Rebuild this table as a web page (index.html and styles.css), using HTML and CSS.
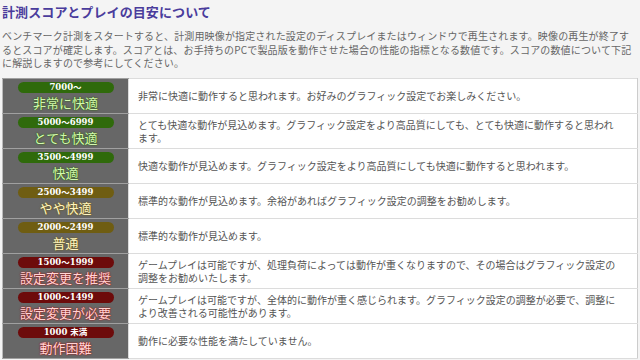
FILE: index.html
```html
<!DOCTYPE html>
<html lang="ja">
<head>
<meta charset="utf-8">
<link rel="stylesheet" href="styles.css">
</head>
<body>
<div class="page">
  <h1 class="title">計測スコアとプレイの目安について</h1>
  <p class="intro">ベンチマーク計測をスタートすると、計測用映像が指定された設定のディスプレイまたはウィンドウで再生されます。映像の再生が終了するとスコアが確定します。スコアとは、お手持ちのPCで製品版を動作させた場合の性能の指標となる数値です。スコアの数値について下記に解説しますので参考にしてください。</p>
  <table class="score">
    <tr>
      <td class="rank green"><span class="pill">7000～</span><span class="label">非常に快適</span></td>
      <td class="desc">非常に快適に動作すると思われます。お好みのグラフィック設定でお楽しみください。</td>
    </tr>
    <tr>
      <td class="rank green"><span class="pill">5000～6999</span><span class="label">とても快適</span></td>
      <td class="desc">とても快適な動作が見込めます。グラフィック設定をより高品質にしても、とても快適に動作すると思われます。</td>
    </tr>
    <tr>
      <td class="rank green"><span class="pill">3500～4999</span><span class="label">快適</span></td>
      <td class="desc">快適な動作が見込めます。グラフィック設定をより高品質にしても快適に動作すると思われます。</td>
    </tr>
    <tr>
      <td class="rank yellow"><span class="pill">2500～3499</span><span class="label">やや快適</span></td>
      <td class="desc">標準的な動作が見込めます。余裕があればグラフィック設定の調整をお勧めします。</td>
    </tr>
    <tr>
      <td class="rank yellow"><span class="pill">2000～2499</span><span class="label">普通</span></td>
      <td class="desc">標準的な動作が見込めます。</td>
    </tr>
    <tr>
      <td class="rank red"><span class="pill">1500～1999</span><span class="label">設定変更を推奨</span></td>
      <td class="desc">ゲームプレイは可能ですが、処理負荷によっては動作が重くなりますので、その場合はグラフィック設定の調整をお勧めいたします。</td>
    </tr>
    <tr>
      <td class="rank red"><span class="pill">1000～1499</span><span class="label">設定変更が必要</span></td>
      <td class="desc">ゲームプレイは可能ですが、全体的に動作が重く感じられます。グラフィック設定の調整が必要で、調整により改善される可能性があります。</td>
    </tr>
    <tr>
      <td class="rank red"><span class="pill">1000 未満</span><span class="label">動作困難</span></td>
      <td class="desc">動作に必要な性能を満たしていません。</td>
    </tr>
  </table>
</div>
</body>
</html>
```

FILE: styles.css
```css
html, body {
  margin: 0;
  padding: 0;
  background: #f4f4f4;
}
body {
  font-family: "Noto Sans CJK JP", "Noto Sans", sans-serif;
  color: #555;
}
.page {
  padding: 4px 2px 0 2px;
}
.title {
  margin: 0;
  font-size: 13px;
  line-height: 16px;
  font-weight: bold;
  color: #4a3c9c;
  letter-spacing: 0.1px;
}
.intro {
  margin: 9px 0 0 0;
  font-size: 10px;
  line-height: 13.5px;
  letter-spacing: 0.15px;
  color: #666;
}
.score {
  margin-top: 8px;
  width: 636px;
  border-collapse: collapse;
  background: #fff;
}
.score tr {
  height: 35px;
}
.score td {
  padding: 0;
}
.rank {
  width: 126px;
  box-sizing: border-box;
  vertical-align: top;
  padding-top: 3px !important;
  background: #676767;
  text-align: center;
  border-top: 1px solid #a0a0a0;
  border-bottom: 1px solid #a0a0a0;
  border-left: 1px solid #bbb;
}
.pill {
  display: block;
  width: 96px;
  height: 11px;
  margin: 0 auto;
  border-radius: 6px;
  color: #fff;
  font-family: "DejaVu Serif", "Liberation Serif", "Noto Sans CJK JP", serif;
  font-weight: bold;
  font-size: 8.5px;
  line-height: 11px;
}
.label {
  display: block;
  margin-top: 2px;
  font-size: 13px;
  line-height: 16px;
}
.green .pill { background: #2f6a0b; }
.green .label { color: #d4f7b0; text-shadow: 0 0 2px #2f6a0b, 0 0 1px #2f6a0b; }
.yellow .pill { background: #6f5d12; }
.yellow .label { color: #fff4c0; text-shadow: 0 0 2px #6f5d12, 0 0 1px #6f5d12; }
.red .pill { background: #6d0b0b; }
.red .label { color: #ffd4d4; text-shadow: 0 0 2px #a01010, 0 0 1px #a01010; }
.desc {
  vertical-align: middle;
  padding: 0 15px 0 9px !important;
  font-size: 10px;
  line-height: 13px;
  color: #555;
  border: 1px solid #dcdcdc;
  border-right: 1px solid #ccc;
}
```
